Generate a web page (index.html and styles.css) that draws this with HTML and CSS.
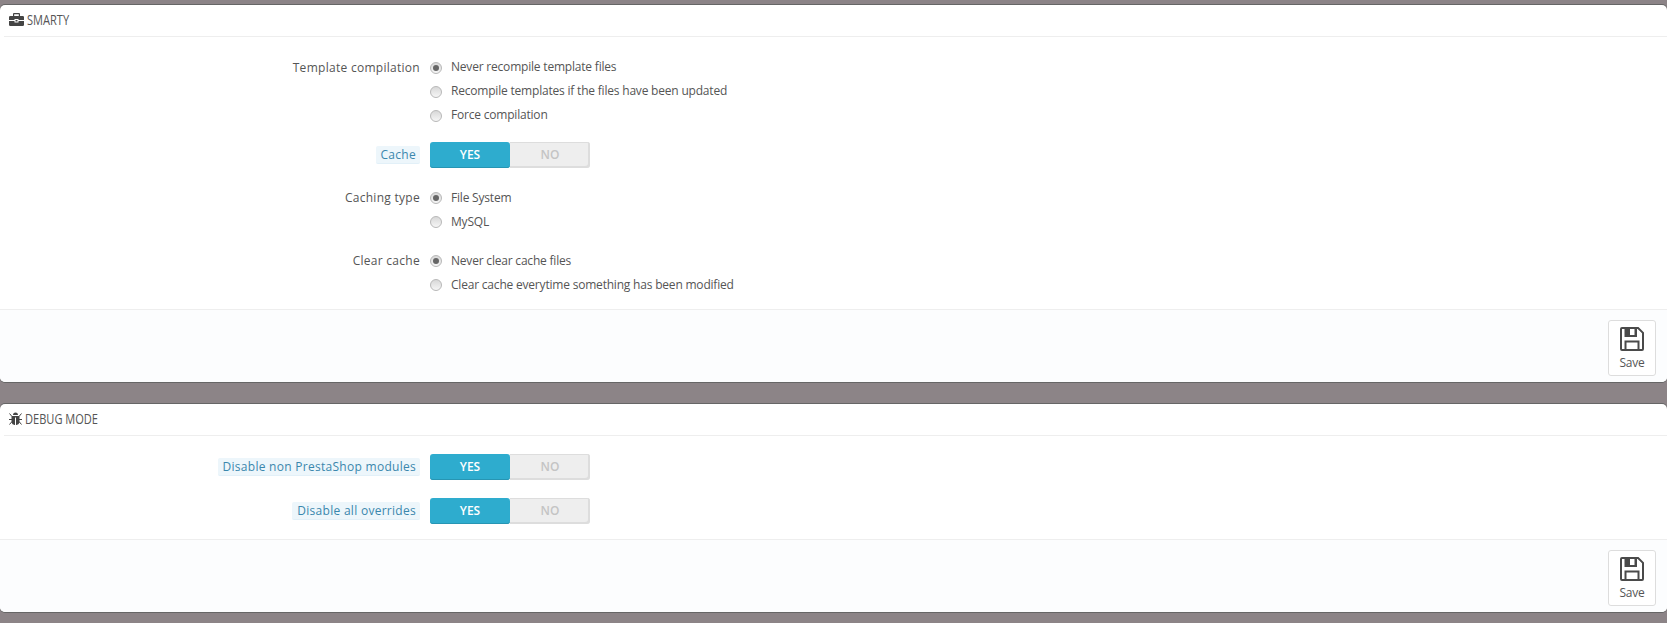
FILE: index.html
```html
<!DOCTYPE html>
<html>

<head>
  <title>Performance</title>
  <link rel="stylesheet" href="styles.css">
</head>

<body>
  <div class="panel panel-smarty">
    <h3 class="panel-heading">
      <svg class="head-icon" width="15" height="13" viewBox="0 0 15 13">
        <path fill="#444" d="M5 0h5a1 1 0 0 1 1 1v2H9.800V1.300H5.200V3H4V1a1 1 0 0 1 1-1zM1.200 3h12.600A1.200 1.200 0 0 1 15 4.200V7H9.500V6h-4v1H0V4.200A1.200 1.200 0 0 1 1.200 3zM6.500 7h2v1.500h-2zM0 8h5.500v1.500h4V8H15v3.800a1.200 1.200 0 0 1-1.200 1.200H1.200A1.200 1.200 0 0 1 0 11.800z" />
      </svg>
      <span class="heading-text">SMARTY</span>
    </h3>
    <div class="form-body">
      <div class="form-row row-radios">
        <label class="row-label">Template compilation</label>
        <div class="radios">
          <label class="radio"><span class="radio-dot checked"></span>Never recompile template files</label>
          <label class="radio"><span class="radio-dot"></span>Recompile templates if the files have been updated</label>
          <label class="radio"><span class="radio-dot"></span>Force compilation</label>
        </div>
      </div>
      <div class="form-row row-switch">
        <label class="row-label"><span class="hint">Cache</span></label>
        <div class="switch"><span class="switch-yes">YES</span><span class="switch-no">NO</span></div>
      </div>
      <div class="form-row row-radios">
        <label class="row-label">Caching type</label>
        <div class="radios">
          <label class="radio"><span class="radio-dot checked"></span>File System</label>
          <label class="radio"><span class="radio-dot"></span>MySQL</label>
        </div>
      </div>
      <div class="form-row row-radios">
        <label class="row-label">Clear cache</label>
        <div class="radios">
          <label class="radio"><span class="radio-dot checked"></span>Never clear cache files</label>
          <label class="radio"><span class="radio-dot"></span>Clear cache everytime something has been modified</label>
        </div>
      </div>
    </div>
    <div class="panel-footer">
      <button class="save" type="button">
        <svg width="24" height="24" viewBox="0 0 24 24">
          <path fill="#4a4a4a" fill-rule="evenodd" d="M2 0h16.500L24 5.500V22a2 2 0 0 1-2 2H2a2 2 0 0 1-2-2V2a2 2 0 0 1 2-2zM2 2v20h2.500V13.500h15V22H22V6.300L17.700 2H17v8H4.500V2zM6.500 15.500V22h11v-6.500zM10 2v6h4.500V2z" />
        </svg>
        <span>Save</span>
      </button>
    </div>
  </div>

  <div class="panel panel-debug">
    <h3 class="panel-heading">
      <svg class="head-icon" width="13" height="13" viewBox="0 0 13 13">
        <path fill="#444" d="M4 3a2.500 2.500 0 0 1 5 0zM3 4h7a1 1 0 0 1 .5 1v5.500A3.500 3.500 0 0 1 7 13V5.500H6V13a3.500 3.500 0 0 1-3.500-2.500V5A1 1 0 0 1 3 4z" />
        <path fill="none" stroke="#444" d="M0.500 1.500l2.500 3M12.500 1.500l-2.500 3M0 7.500h3M10 7.500h3M0.500 12.500l2.500-3M12.500 12.500l-2.500-3" />
      </svg>
      <span class="heading-text">DEBUG MODE</span>
    </h3>
    <div class="form-body">
      <div class="form-row row-switch">
        <label class="row-label"><span class="hint">Disable non PrestaShop modules</span></label>
        <div class="switch"><span class="switch-yes">YES</span><span class="switch-no">NO</span></div>
      </div>
      <div class="form-row row-switch">
        <label class="row-label"><span class="hint">Disable all overrides</span></label>
        <div class="switch"><span class="switch-yes">YES</span><span class="switch-no">NO</span></div>
      </div>
    </div>
    <div class="panel-footer">
      <button class="save" type="button">
        <svg width="24" height="24" viewBox="0 0 24 24">
          <path fill="#4a4a4a" fill-rule="evenodd" d="M2 0h16.500L24 5.500V22a2 2 0 0 1-2 2H2a2 2 0 0 1-2-2V2a2 2 0 0 1 2-2zM2 2v20h2.500V13.500h15V22H22V6.300L17.700 2H17v8H4.500V2zM6.500 15.500V22h11v-6.500zM10 2v6h4.500V2z" />
        </svg>
        <span>Save</span>
      </button>
    </div>
  </div>
</body>

</html>
```

FILE: styles.css
```css
html,
body {
  margin: 0;
  height: 623px;
  overflow: hidden;
}

body {
  background-color: #8c8487;
  padding-top: 5px;
  box-sizing: border-box;
  font-family: "Open Sans", sans-serif;
  font-size: 12px;
  color: #555;
}

.panel {
  display: flex;
  flex-direction: column;
  overflow: hidden;
  background-color: #fff;
  border-radius: 5px;
  box-shadow: 0 -1px 0 #666, 0 1px 0 #666;
}

.panel-smarty {
  height: 377px;
  margin-bottom: 22px;
}

.panel-debug {
  height: 208px;
}

.panel-heading {
  margin: 0 0 0 4px;
  height: 32px;
  flex: none;
  box-sizing: border-box;
  border-bottom: 1px solid #eee;
  padding: 0 0 2px 5px;
  display: flex;
  align-items: center;
  gap: 3px;
  font-size: 14px;
  font-weight: normal;
  color: #555;
}

.heading-text {
  transform: scaleX(0.79);
  transform-origin: left center;
}

.head-icon {
  flex: none;
}

.form-body {
  padding-top: 18px;
}

.form-row {
  display: flex;
  align-items: flex-start;
}

.row-radios {
  margin-bottom: 15px;
}

.row-radios .row-label {
  padding-top: 1px;
}

.row-switch {
  margin-bottom: 18px;
}

.panel-smarty .row-switch {
  margin-bottom: 17px;
}

.row-label {
  width: 420px;
  flex: none;
  box-sizing: border-box;
  text-align: right;
  line-height: 24px;
  letter-spacing: 0.28px;
}

.row-switch .row-label {
  line-height: 26px;
}

.hint {
  display: inline-block;
  padding: 0 4px 0 5px;
  line-height: 17px;
  background-color: #edf6fb;
  border-bottom: 1px solid #e2f0f8;
  border-radius: 2px;
  color: #3a87ad;
}

.radios {
  margin-left: 10px;
}

.row-radios:first-child .radios {
  margin-top: -1px;
  margin-bottom: 1px;
}

.radio {
  display: flex;
  align-items: center;
  height: 24px;
  letter-spacing: -0.2px;
}

.radio-dot {
  width: 12px;
  height: 12px;
  margin-top: 2px;
  margin-right: 9px;
  box-sizing: border-box;
  border: 1px solid #b8b8b8;
  border-radius: 50%;
  background: linear-gradient(#d8d8d8, #f6f6f6);
  display: flex;
  align-items: center;
  justify-content: center;
}

.row-radios:first-child .radio-dot {
  margin-top: 4px;
}

.radio-dot.checked::after {
  content: "";
  width: 6px;
  height: 6px;
  border-radius: 50%;
  background-color: #666;
}

.switch {
  margin-left: 10px;
  width: 160px;
  height: 26px;
  display: flex;
  text-align: center;
  line-height: 25px;
  font-weight: 600;
}

.switch-yes {
  flex: 1;
  background-color: #2eacce;
  border-radius: 3px;
  box-shadow: inset 0 -1px 0 #2795b3;
  color: #fff;
}

.switch-no {
  flex: 1;
  background-color: #eee;
  border-radius: 0 3px 3px 0;
  box-shadow: inset -2px -2px 0 #ddd, inset 0 1px 0 #ddd;
  color: #c4c4c4;
}

.panel-footer {
  flex: 1;
  border-top: 1px solid #eee;
  margin-top: -3px;
  background-color: #fcfdfe;
  padding: 10px 11px 0 0;
  display: flex;
  justify-content: flex-end;
  align-items: flex-start;
}

.panel-smarty .panel-footer {
  margin-top: -2px;
}

.save {
  width: 48px;
  height: 56px;
  box-sizing: border-box;
  padding: 6px 0 0;
  background-color: #fff;
  border: 1px solid #ddd;
  border-radius: 3px;
  display: flex;
  flex-direction: column;
  align-items: center;
  gap: 3px;
  font-family: "Open Sans", sans-serif;
  font-size: 12px;
  letter-spacing: -0.2px;
  color: #555;
}
```
